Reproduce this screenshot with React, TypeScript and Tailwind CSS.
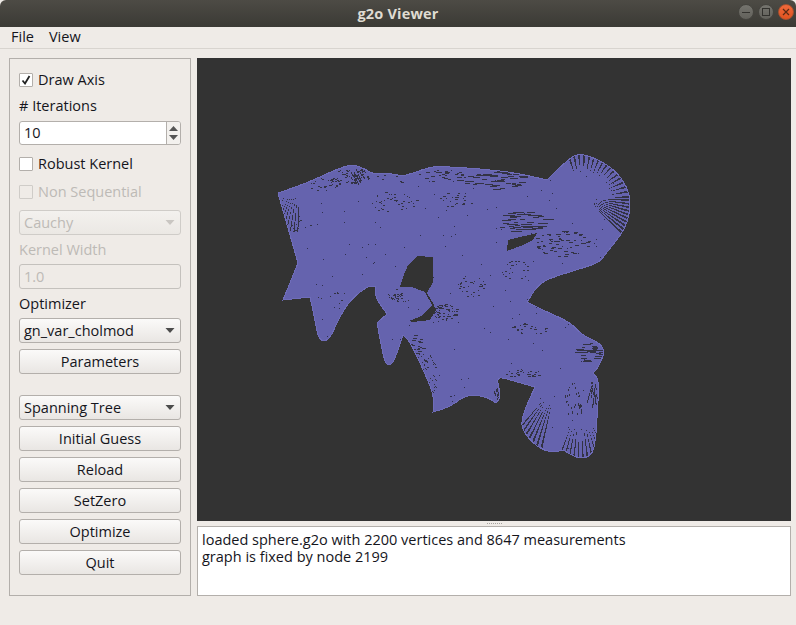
import React from "react";

const FONT = "font-['Open_Sans','Noto_Sans',sans-serif]";

// silhouette of the sphere graph, in page pixels. A doubled point stays a sharp corner when smoothed.
const OUTLINE =
  "278,193 278,193 307,183 337,169 353,164 367,170 373,174 387,173 403,176 413,173 433,166 450,167 483,169 517,173 547,180 547,180 560,167 575,154 587,155 607,164 622,178 630,195 630,213 625,228 617,240 607,252 600,262 583,268 563,274 540,282 527,302 527,302 547,312 570,322 582,335 600,343 605,352 598,368 593,373 593,373 599,380 598,403 595,450 587,458 577,458 563,450 563,450 552,453 537,447 523,432 521,418 535,387 535,387 517,382 500,377 497,380 501,397 496,403 496,403 487,397 473,395 463,397 450,407 433,412 433,412 434,397 427,378 417,357 410,342 403,335 403,335 397,353 393,363 388,366 384,360 377,323 377,323 387,314 387,314 375,297 375,286 375,286 368,286 350,300 337,322 332,335 325,342 318,338 315,320 310,297 310,297 283,300 283,300 298,263 298,263";
const HOLE_A =
  "417,256 433,257 433,282 427,293 433,303 436,310 430,320 412,322 410,321 423,315 432,305 425,292 412,287 400,287 403,277 408,265";
const HOLE_B = "508,240 537,233 533,240 523,245 507,251";

const smooth = (raw: string) => {
  const p = raw.split(" ").map((s) => s.split(",").map(Number));
  const mid = (a: number[], b: number[]) => [(a[0] + b[0]) / 2, (a[1] + b[1]) / 2];
  const start = mid(p[p.length - 1], p[0]);
  let d = `M${start[0]} ${start[1]}`;
  p.forEach((pt, i) => {
    const m = mid(pt, p[(i + 1) % p.length]);
    d += ` Q${pt[0]} ${pt[1]} ${m[0]} ${m[1]}`;
  });
  return d + " Z";
};

type Fan = { cx: number; cy: number; from: number; to: number; step: number; r1: number; r2: number; w: number };
const FANS: Fan[] = [
  { cx: 583, cy: 200, from: -108, to: -3, step: 6.5, r1: 28, r2: 50, w: 1.4 },
  { cx: 585, cy: 198, from: 3, to: 46, step: 4.5, r1: 10, r2: 50, w: 1 },
  { cx: 556, cy: 385, from: 103, to: 134, step: 4.5, r1: 20, r2: 64, w: 1 },
  { cx: 580, cy: 400, from: 60, to: 112, step: 4.5, r1: 28, r2: 60, w: 0.9 },
  { cx: 300, cy: 170, from: 92, to: 120, step: 3.5, r1: 26, r2: 62, w: 0.6 },
  { cx: 575, cy: 325, from: 3, to: 32, step: 4, r1: 16, r2: 32, w: 0.6 },
  { cx: 600, cy: 355, from: 70, to: 110, step: 7, r1: 25, r2: 50, w: 0.6 },
];

// cx, cy, rx, ry, count, dash length, slope in degrees
const CLUSTERS: number[][] = [
  [322, 185, 22, 7, 22, 2, -25],
  [345, 178, 18, 9, 26, 3, -25],
  [360, 175, 10, 7, 22, 4, 60],
  [395, 202, 24, 12, 40, 1, 15],
  [395, 178, 20, 5, 14, 2, 0],
  [440, 176, 25, 6, 30, 3, 8],
  [490, 180, 34, 9, 50, 6, 3],
  [520, 222, 24, 11, 50, 8, -4],
  [562, 244, 28, 14, 60, 3, -6],
  [445, 312, 13, 8, 70, 1, 0],
  [400, 298, 9, 5, 20, 1, 0],
  [423, 375, 14, 24, 90, 2, 45],
  [415, 345, 9, 10, 24, 3, 15],
  [530, 328, 18, 6, 28, 2, 25],
  [522, 373, 20, 4, 28, 2, 10],
  [498, 393, 4, 8, 16, 3, 70],
  [587, 353, 13, 10, 30, 6, -5],
  [594, 392, 5, 13, 26, 3, 85],
  [455, 200, 18, 8, 22, 2, 20],
  [560, 298, 14, 8, 30, 2, 0],
  [470, 285, 14, 12, 30, 1, 0],
  [515, 270, 14, 10, 22, 1, 0],
  [300, 225, 14, 10, 10, 1, 0],
  [395, 295, 8, 6, 16, 1, 0],
  [575, 400, 12, 18, 30, 2, 70],
  [340, 298, 22, 6, 14, 1, 0],
];

const rng = (seed: number) => () => {
  seed = (seed * 16807) % 2147483647;
  return seed / 2147483647;
};

const Mesh = () => {
  const rand = rng(20240);
  const marks: React.ReactNode[] = [];
  const outline = smooth(OUTLINE);
  FANS.forEach((f, i) => {
    for (let a = f.from; a <= f.to; a += f.step) {
      const t = (a * Math.PI) / 180;
      const nx = -Math.sin(t) * f.w;
      const ny = Math.cos(t) * f.w;
      const ex = f.cx + Math.cos(t) * f.r2;
      const ey = f.cy + Math.sin(t) * f.r2;
      marks.push(
        <polygon
          key={`f${i}-${a}`}
          points={`${f.cx + Math.cos(t) * f.r1},${f.cy + Math.sin(t) * f.r1} ${ex + nx},${ey + ny} ${ex - nx},${ey - ny}`}
          stroke="none"
          fill="#333344"
        />
      );
    }
  });
  CLUSTERS.forEach(([cx, cy, rx, ry, n, len, slope], i) => {
    const t = (slope * Math.PI) / 180;
    for (let k = 0; k < n; k++) {
      const r = Math.sqrt(rand());
      const a = rand() * Math.PI * 2;
      const x = Math.round(cx + Math.cos(a) * r * rx);
      const y = Math.round(cy + Math.sin(a) * r * ry);
      const l = len * (0.5 + rand());
      if (len === 1) {
        marks.push(<rect key={`c${i}-${k}`} x={x} y={y} width={1 + Math.round(rand())} height={1} stroke="none" fill="#333344" />);
      } else {
        marks.push(
          <line key={`c${i}-${k}`} x1={x} y1={y} x2={x + Math.cos(t) * l} y2={y + Math.sin(t) * l + 0.01} />
        );
      }
    }
  });
  // stray single pixels over the whole graph
  for (let k = 0; k < 260; k++) {
    const x = Math.round(285 + rand() * 330);
    const y = Math.round(170 + rand() * 280);
    marks.push(<rect key={`s${k}`} x={x} y={y} width={1} height={1} fill="#2f2f4f" stroke="none" />);
  }
  return (
    <svg viewBox="197 58 594 463" className="w-full h-full block" shapeRendering="crispEdges">
      <defs>
        <clipPath id="mesh">
          <path d={outline} />
        </clipPath>
      </defs>
      <path d={outline} fill="#6563ae" />
      <g clipPath="url(#mesh)" stroke="#333344" strokeWidth={1}>
        {marks}
      </g>
      <path d={outline} fill="none" stroke="#6f6dba" strokeWidth={1} />
      <polygon points={HOLE_A} fill="#333333" />
      <polygon points={HOLE_B} fill="#333333" />
    </svg>
  );
};

const Check = ({ label, checked, disabled }: { label: string; checked?: boolean; disabled?: boolean }) => (
  <div className={`flex items-center h-[20px] ${disabled ? "text-[#bdbab6]" : ""}`}>
    <div
      className={`w-[14px] h-[14px] border rounded-[1px] flex items-center justify-center ${
        disabled ? "border-[#cfccc8] bg-[#efebe7]" : "border-[#b3afab] bg-white"
      }`}
    >
      {checked && (
        <svg width="10" height="10" viewBox="0 0 10 10">
          <path d="M1.5 5.5 L4 8.5 L8.5 1" fill="none" stroke="#222" strokeWidth="1.8" />
        </svg>
      )}
    </div>
    <span className="ml-[5px]">{label}</span>
  </div>
);

const Caret = ({ disabled }: { disabled?: boolean }) => (
  <svg width="10" height="5" viewBox="0 0 10 5">
    <path d="M0.5 0 H9.5 L5 5 Z" fill={disabled ? "#c9c6c2" : "#4c4c4c"} />
  </svg>
);

const Combo = ({ label, disabled, className = "" }: { label: string; disabled?: boolean; className?: string }) => (
  <div
    className={`h-[25px] flex items-center justify-between pl-[4px] pr-[5px] border rounded-[3px] bg-gradient-to-b ${
      disabled
        ? "border-[#cfccc8] from-[#f3f1ee] to-[#ebe8e4] text-[#bdbab6]"
        : "border-[#b3afab] from-[#fbfaf9] to-[#e9e6e3]"
    } ${className}`}
  >
    <span>{label}</span>
    <Caret disabled={disabled} />
  </div>
);

const Btn = ({ label, className = "mt-[6px]" }: { label: string; className?: string }) => (
  <button
    className={`h-[25px] w-full flex items-center justify-center border border-[#b3afab] rounded-[3px] bg-gradient-to-b from-[#fbfaf9] to-[#e9e6e3] ${className}`}
  >
    {label}
  </button>
);

const WinBtn = ({ children, red }: { children: React.ReactNode; red?: boolean }) => (
  <div
    className={`w-[16px] h-[16px] rounded-full flex items-center justify-center border bg-gradient-to-b ${
      red ? "from-[#f0693a] to-[#e0531f] border-[#a8502f]" : "from-[#75746e] to-[#62615b] border-[#45443f]"
    }`}
  >
    {children}
  </div>
);

export default function App() {
  return (
    <div className={`w-[796px] h-[625px] flex flex-col overflow-hidden bg-[#efebe7] text-[#15151c] text-[14.5px] ${FONT}`}>
      <div className="relative h-[27px] shrink-0 flex items-center justify-center bg-gradient-to-b from-[#4d4b45] to-[#3b3a35] rounded-t-[6px]">
        <span className="font-bold text-[14.5px] text-[#dfdbd2] tracking-[0.2px]">g2o Viewer</span>
        <div className="absolute right-[2px] top-[4px] flex gap-[4px]">
          <WinBtn>
            <div className="w-[8px] h-[1px] bg-[#33322e]" />
          </WinBtn>
          <WinBtn>
            <div className="w-[8px] h-[8px] border border-[#33322e]" />
          </WinBtn>
          <WinBtn red>
            <svg width="8" height="8" viewBox="0 0 8 8">
              <path d="M1 1 L7 7 M7 1 L1 7" stroke="#5a2a14" strokeWidth="1.2" />
            </svg>
          </WinBtn>
        </div>
      </div>

      <div className="h-[22px] shrink-0 flex items-center gap-[15px] pl-[11px] pb-[2px] border-b border-[#d8d4cf]">
        <span>File</span>
        <span>View</span>
      </div>

      <div className="flex gap-[6px] pl-[9px] pr-[5px] pt-[9px]">
        <div className="w-[182px] h-[538px] shrink-0 border border-[#b3afab] px-[9px] pt-[11px] flex flex-col">
          <Check label="Draw Axis" checked />
          <div className="h-[19px] mt-[6px] leading-[19px]"># Iterations</div>
          <div className="h-[24px] mt-[6px] flex border border-[#b3afab] rounded-[3px] bg-white overflow-hidden">
            <span className="flex-1 pl-[4px] leading-[22px]">10</span>
            <div className="w-[14px] flex flex-col items-center justify-center gap-[4px] border-l border-[#b3afab] bg-[#f3f1ee]">
              <svg width="9" height="5" viewBox="0 0 9 5">
                <path d="M0 5 L4.5 0 L9 5 Z" fill="#555" />
              </svg>
              <svg width="9" height="5" viewBox="0 0 9 5">
                <path d="M0 0 H9 L4.5 5 Z" fill="#555" />
              </svg>
            </div>
          </div>
          <div className="mt-[9px]">
            <Check label="Robust Kernel" />
          </div>
          <div className="mt-[8px]">
            <Check label="Non Sequential" disabled />
          </div>
          <Combo label="Cauchy" disabled className="mt-[8px]" />
          <div className="h-[19px] mt-[6px] leading-[18px] text-[#bdbab6]">Kernel Width</div>
          <div className="h-[25px] mt-[4px] pl-[4px] leading-[23px] border border-[#c4c1bd] rounded-[3px] text-[#bdbab6]">
            1.0
          </div>
          <div className="h-[19px] mt-[6px] leading-[18px]">Optimizer</div>
          <Combo label="gn_var_cholmod" className="mt-[4px]" />
          <Btn label="Parameters" />
          <Combo label="Spanning Tree" className="mt-[21px]" />
          <Btn label="Initial Guess" />
          <Btn label="Reload" />
          <Btn label="SetZero" />
          <Btn label="Optimize" />
          <Btn label="Quit" />
        </div>

        <div className="flex-1 flex flex-col">
          <div className="h-[463px] bg-[#333333]">
            <Mesh />
          </div>
          <div className="h-[5px] flex items-center justify-center gap-[1px]">
            {Array.from({ length: 8 }).map((_, i) => (
              <div key={i} className="w-[1px] h-[1px] bg-[#a5a29e]" />
            ))}
          </div>
          <div className="h-[70px] border border-[#b3afab] bg-white pl-[4px] pt-[4px] leading-[17px]">
            <div>loaded sphere.g2o with 2200 vertices and 8647 measurements</div>
            <div>graph is fixed by node 2199</div>
          </div>
        </div>
      </div>
    </div>
  );
}
